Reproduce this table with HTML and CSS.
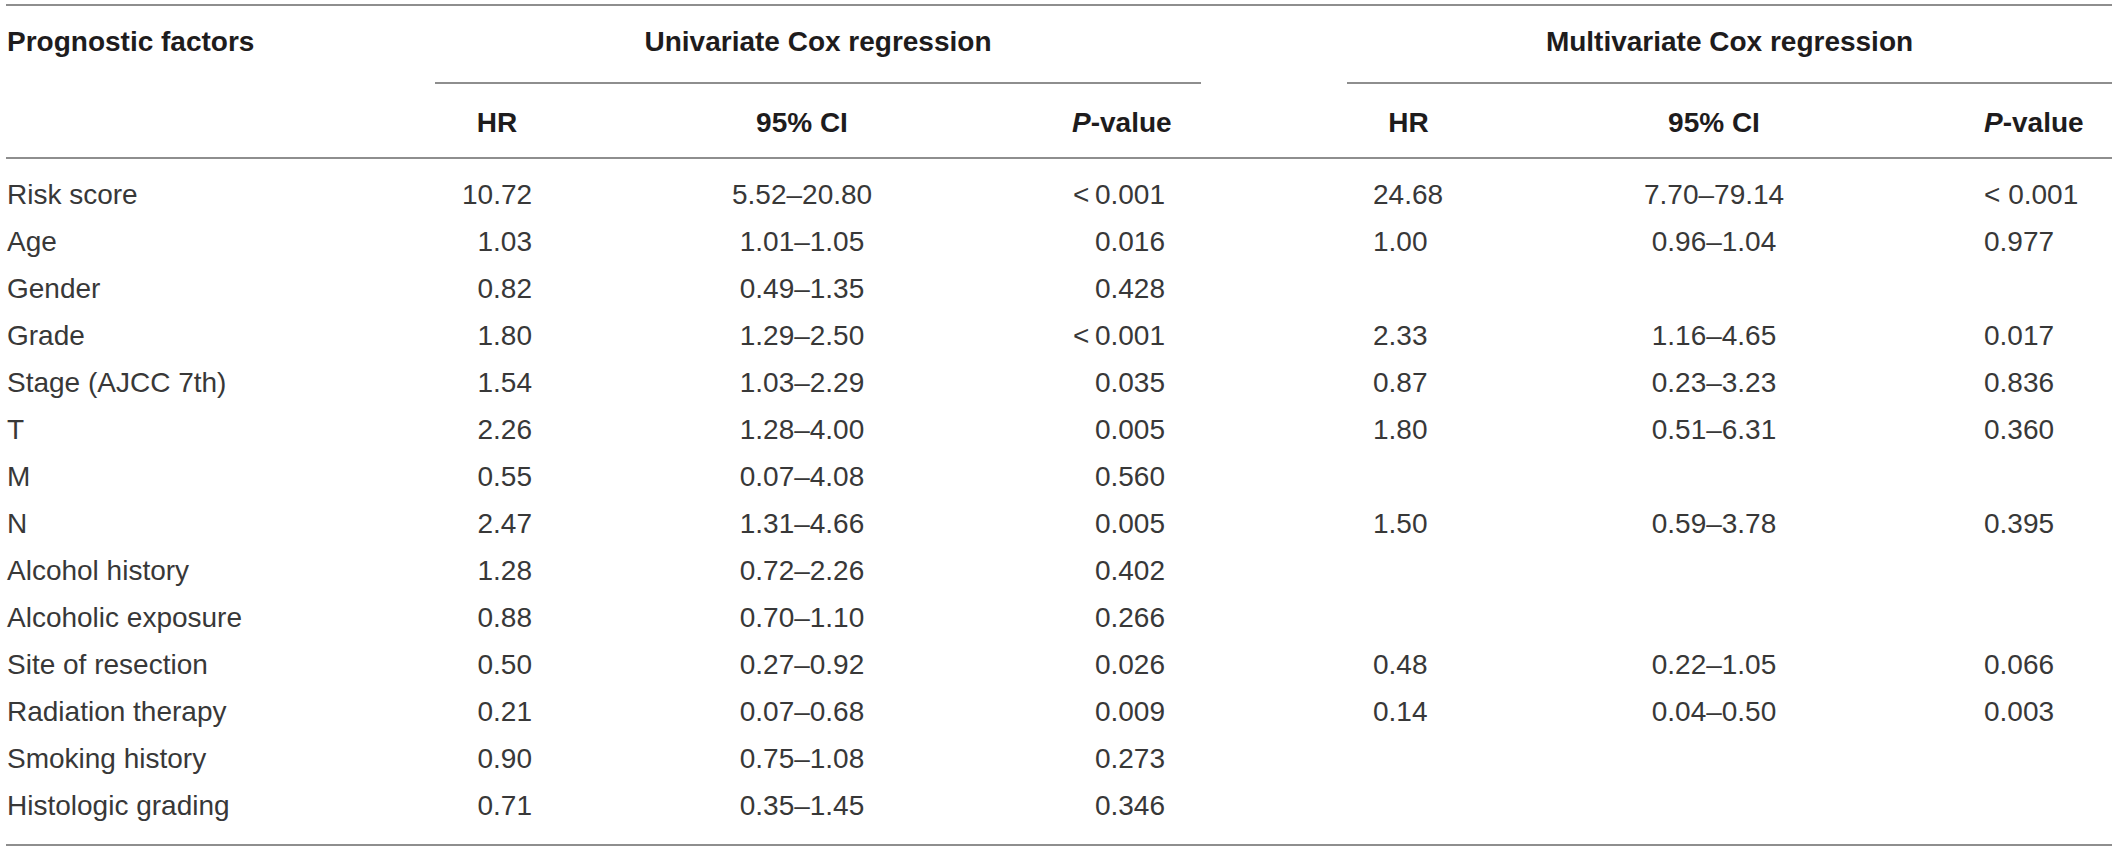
FILE: index.html
```html
<!DOCTYPE html>
<html>
<head>
<link rel="stylesheet" href="styles.css">
</head>

<body>
<div class="table">
  <div class="thead">
    <div class="lead">Prognostic factors</div>
    <div class="group uni">Univariate Cox regression</div>
    <div class="group multi">Multivariate Cox regression</div>
    <div class="sub center">HR</div>
    <div class="sub center">95% CI</div>
    <div class="sub">
      <i>P</i>-value</div>
    <div class="sub center">HR</div>
    <div class="sub center">95% CI</div>
    <div class="sub">
      <i>P</i>-value</div>
  </div>

  <div class="tbody">
    <div class="row"><span>Risk score</span><span class="hr">10.72</span><span class="ci">5.52–20.80</span><span class="p">&lt;&#8201;0.001</span><span>24.68</span><span class="ci">7.70–79.14</span><span>&lt; 0.001</span></div>
    <div class="row"><span>Age</span><span class="hr">1.03</span><span class="ci">1.01–1.05</span><span class="p">0.016</span><span>1.00</span><span class="ci">0.96–1.04</span><span>0.977</span></div>
    <div class="row"><span>Gender</span><span class="hr">0.82</span><span class="ci">0.49–1.35</span><span class="p">0.428</span><span></span><span></span><span></span></div>
    <div class="row"><span>Grade</span><span class="hr">1.80</span><span class="ci">1.29–2.50</span><span class="p">&lt;&#8201;0.001</span><span>2.33</span><span class="ci">1.16–4.65</span><span>0.017</span></div>
    <div class="row"><span>Stage (AJCC 7th)</span><span class="hr">1.54</span><span class="ci">1.03–2.29</span><span class="p">0.035</span><span>0.87</span><span class="ci">0.23–3.23</span><span>0.836</span></div>
    <div class="row"><span>T</span><span class="hr">2.26</span><span class="ci">1.28–4.00</span><span class="p">0.005</span><span>1.80</span><span class="ci">0.51–6.31</span><span>0.360</span></div>
    <div class="row"><span>M</span><span class="hr">0.55</span><span class="ci">0.07–4.08</span><span class="p">0.560</span><span></span><span></span><span></span></div>
    <div class="row"><span>N</span><span class="hr">2.47</span><span class="ci">1.31–4.66</span><span class="p">0.005</span><span>1.50</span><span class="ci">0.59–3.78</span><span>0.395</span></div>
    <div class="row"><span>Alcohol history</span><span class="hr">1.28</span><span class="ci">0.72–2.26</span><span class="p">0.402</span><span></span><span></span><span></span></div>
    <div class="row"><span>Alcoholic exposure</span><span class="hr">0.88</span><span class="ci">0.70–1.10</span><span class="p">0.266</span><span></span><span></span><span></span></div>
    <div class="row"><span>Site of resection</span><span class="hr">0.50</span><span class="ci">0.27–0.92</span><span class="p">0.026</span><span>0.48</span><span class="ci">0.22–1.05</span><span>0.066</span></div>
    <div class="row"><span>Radiation therapy</span><span class="hr">0.21</span><span class="ci">0.07–0.68</span><span class="p">0.009</span><span>0.14</span><span class="ci">0.04–0.50</span><span>0.003</span></div>
    <div class="row"><span>Smoking history</span><span class="hr">0.90</span><span class="ci">0.75–1.08</span><span class="p">0.273</span><span></span><span></span><span></span></div>
    <div class="row"><span>Histologic grading</span><span class="hr">0.71</span><span class="ci">0.35–1.45</span><span class="p">0.346</span><span></span><span></span><span></span></div>
  </div>
</div>
</body>
</html>
```

FILE: styles.css
```css
body {
margin: 0;
background: #ffffff;
font-family: "Liberation Sans", Arial, sans-serif;
font-size: 28px;
color: #383838;
}
.table {
margin: 4px 0 0 6px;
width: 2106px;
border-top: 2px solid #8e8e8e;
border-bottom: 2px solid #8e8e8e;
}
.thead,
.row {
display: grid;
grid-template-columns: 256px 70px 140px 101px 71px 140px 1fr;
column-gap: 200px;
}
.thead {
font-weight: bold;
color: #1e1c1d;
line-height: 32px;
border-bottom: 2px solid #8e8e8e;
}
.thead i {
font-style: italic;
}
.lead {
grid-row: 1 / 3;
padding: 20px 0 0 1px;
}
.group {
padding: 20px 0 24px;
text-align: center;
border-bottom: 2px solid #8e8e8e;
}
.uni {
grid-column: 2 / 5;
margin: 0 -28px 0 -27px;
}
.multi {
grid-column: 5 / 8;
margin-left: -26px;
}
.sub {
padding: 23px 0 18px;
white-space: nowrap;
}
.center {
text-align: center;
}
.tbody {
padding: 12px 0 15px;
}
.row {
line-height: 47px;
white-space: nowrap;
}
.row span:first-child {
padding-left: 1px;
}
.hr {
text-align: right;
}
.ci {
text-align: center;
}
.p {
text-align: right;
padding-right: 8px;
}
```
